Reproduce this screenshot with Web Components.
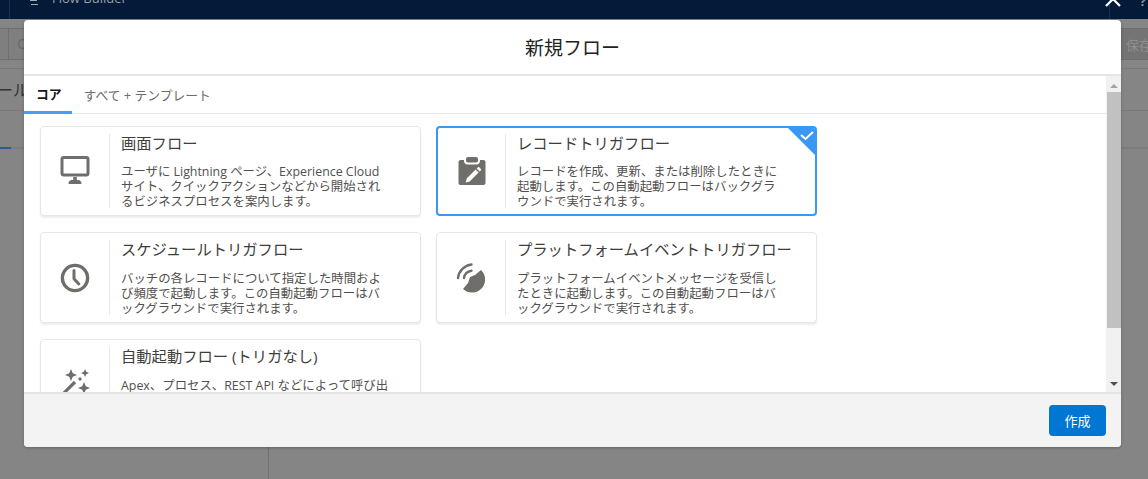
<!DOCTYPE html>
<html lang="ja">
<head>
<meta charset="utf-8">
<title>新規フロー</title>
<style>
    html, body { margin: 0; height: 100%; overflow: hidden; }
    body { font-family: "Open Sans", "Noto Sans CJK JP", sans-serif; }
</style>
</head>
<body>
<flow-backdrop>
    <flow-modal heading="新規フロー">
        <flow-card heading="画面フロー" icon="screen">ユーザに Lightning ページ、Experience Cloud サイト、クイックアクションなどから開始されるビジネスプロセスを案内します。</flow-card>
        <flow-card heading="レコードトリガフロー" icon="record" selected>レコードを作成、更新、または削除したときに起動します。この自動起動フローはバックグラウンドで実行されます。</flow-card>
        <flow-card heading="スケジュールトリガフロー" icon="clock">バッチの各レコードについて指定した時間および頻度で起動します。この自動起動フローはバックグラウンドで実行されます。</flow-card>
        <flow-card heading="プラットフォームイベントトリガフロー" icon="event">プラットフォームイベントメッセージを受信したときに起動します。この自動起動フローはバックグラウンドで実行されます。</flow-card>
        <flow-card heading="自動起動フロー (トリガなし)" icon="wand">Apex、プロセス、REST API などによって呼び出されます。この自動起動フローはバックグラウンドで実行されます。</flow-card>
    </flow-modal>
</flow-backdrop>

<script>
const ICONS = {
    screen: `<svg viewBox="0 0 30 30" width="30" height="30"><rect x="2" y="1.500" width="26" height="17.500" rx="1.800" fill="none" stroke="#706e6b" stroke-width="3"/><path d="M13.200 21h3.600v3h-3.600z" fill="#706e6b"/><path d="M8.500 28c0-2.400 1.400-4 3.400-4h6.200c2 0 3.400 1.600 3.400 4z" fill="#706e6b"/></svg>`,
    record: `<svg viewBox="0 0 30 30" width="30" height="30"><path fill="#706e6b" d="M3.500 4H7v1c0 2 1.500 3.500 3.400 3.500h9.200C21.500 8.500 23 7 23 5V4h3.500c1.100 0 2 .9 2 2v21c0 1.100-.9 2-2 2h-23c-1.100 0-2-.9-2-2V6c0-1.100.9-2 2-2z"/><rect x="9" y="1" width="12" height="5.500" rx="2" fill="#706e6b"/><path fill="#fff" d="M18.600 13.500l3 3-8.900 8.900-4 1 1-4zM19.700 12.400l1-1c.5-.5 1.200-.5 1.700 0l1.300 1.300c.5.5.5 1.200 0 1.700l-1 1z"/></svg>`,
    clock: `<svg viewBox="0 0 30 30" width="30" height="30"><circle cx="15" cy="15" r="12.600" fill="none" stroke="#706e6b" stroke-width="3.400"/><path d="M14 7.500v8.200l4.800 5.200" fill="none" stroke="#706e6b" stroke-width="3" stroke-linecap="round" stroke-linejoin="round"/></svg>`,
    event: `<svg viewBox="0 0 30 30" width="30" height="30"><path fill="#706e6b" d="M7 26A13 13 0 0 0 25 7L19 12l-5 2-2 6z"/><path d="M2 15C2.800 8 8.500 2.200 15.500 1.500M8 15C8.500 11.500 11.500 8.500 15.500 7.800" fill="none" stroke="#706e6b" stroke-width="2.400" stroke-linecap="round"/></svg>`,
    wand: `<svg viewBox="0 0 30 30" width="30" height="30"><g fill="#706e6b"><path d="M11 -1l1.800 4.200L17 5l-4.200 1.800L11 11 9.200 6.800 5 5l4.200-1.800z"/><path d="M25 -1l1.200 2.800L29 3l-2.800 1.200L25 7l-1.200-2.800L21 3l2.800-1.200z"/><path d="M24 12l1.800 4.200L30 18l-4.200 1.800L24 24l-1.800-4.200L18 18l4.200-1.800z"/><path d="M20 7l2 2-2 2-2-2z"/></g><path d="M15 12L1 26" stroke="#706e6b" stroke-width="3.200"/></svg>`
};

class FlowBackdrop extends HTMLElement {
    constructor() {
        super();
        const shadow = this.attachShadow({ mode: 'open' });
        shadow.innerHTML = `
            <style>
                :host {
                    display: flex;
                    flex-direction: column;
                    position: relative;
                    width: 1148px;
                    height: 479px;
                    overflow: hidden;
                    background: #858585;
                    color: #4a4a4a;
                }
                .topbar {
                    height: 19px;
                    flex: none;
                    background: linear-gradient(#1b2f4b, #1b2f4b) 9px 0 / 1px 100% no-repeat,
                                linear-gradient(#1b2f4b, #1b2f4b) 1109px 0 / 1px 100% no-repeat,
                                #031a38;
                    display: flex;
                    justify-content: space-between;
                    color: #9a9fa8;
                    font-size: 13px;
                    line-height: 1;
                    overflow: hidden;
                }
                .topbar .brand { display: flex; gap: 14px; margin-left: 30px; }
                .topbar .brand svg { margin-top: -1px; }
                .topbar .title { margin-top: -8px; }
                .topbar .close { display: flex; gap: 18px; margin-right: 2px; }
                .topbar .close svg { margin-top: -10px; }
                .topbar .help { margin-top: -5px; font-weight: bold; color: #8b8f98; }
                .tools {
                    height: 32px;
                    box-sizing: border-box;
                    margin-top: 9px;
                    flex: none;
                    background: linear-gradient(90deg, #7f7f7f 600px, #747474 600px);
                    border-top: 1px solid #6f6f6f;
                    border-bottom: 1px solid #6f6f6f;
                    display: flex;
                    justify-content: space-between;
                    align-items: center;
                    font-size: 13px;
                    color: #8f8f8f;
                    overflow: hidden;
                    white-space: nowrap;
                }
                .tools .left { height: 100%; margin-left: 8px; border-left: 1px solid #6f6f6f; display: flex; align-items: center; padding-left: 8px; }
                .tools .save { width: 22px; overflow: hidden; }
                .rule { height: 1px; background: #797979; flex: none; margin-top: 8px; }
                .side {
                    font-size: 16px;
                    color: #333;
                    height: 41px;
                    line-height: 43px;
                    margin-left: -3px;
                    flex: none;
                }
                .tab { height: 2px; margin-top: 36px; background: linear-gradient(90deg, #2a5c91 11px, #7b7b7b 11px); flex: none; }
                .split { position: absolute; left: 268px; top: 440px; bottom: 0; width: 1px; background: #6f6f6f; }
                ::slotted(*) { position: absolute; left: 24px; top: 20px; }
            </style>
            <div class="topbar">
                <span class="brand">
                    <svg width="8" height="7" viewBox="0 0 8 7"><path d="M0 1.500h7M1 5.500h7" stroke="#a6abb3" stroke-width="1"/></svg>
                    <span class="title">Flow Builder</span>
                </span>
                <span class="close">
                    <svg width="18" height="18" viewBox="0 0 18 18"><path d="M2 2l14 14M16 2L2 16" stroke="#fff" stroke-width="2.200"/></svg>
                    <span class="help">?</span>
                </span>
            </div>
            <div class="tools">
                <span class="left"><svg width="12" height="12" viewBox="0 0 12 12"><circle cx="6" cy="6" r="4.500" fill="none" stroke="#6a6a6a" stroke-width="1.300"/></svg></span>
                <span class="save">保存</span>
            </div>
            <div class="rule"></div>
            <div class="side">ール</div>
            <div class="rule" style="margin-top:0"></div>
            <div class="tab"></div>
            <div class="split"></div>
            <slot></slot>
        `;
    }
}

class FlowModal extends HTMLElement {
    constructor() {
        super();
        const shadow = this.attachShadow({ mode: 'open' });
        shadow.innerHTML = `
            <style>
                :host {
                    display: flex;
                    flex-direction: column;
                    width: 1097px;
                    height: 427px;
                    background: #fff;
                    border-radius: 4px;
                    overflow: hidden;
                    box-shadow: 0 1px 3px rgba(0,0,0,0.25);
                    color: #3e3e3c;
                }
                header {
                    flex: none;
                    height: 56px;
                    box-sizing: border-box;
                    border-bottom: 2px solid #e5e5e5;
                    display: flex;
                    align-items: center;
                    justify-content: center;
                    font-size: 19px;
                    color: #222;
                }
                .middle { flex: 1; display: flex; min-height: 0; }
                .scroll { flex: 1; min-width: 0; overflow: hidden; }
                .tabs {
                    display: flex;
                    height: 38px;
                    box-sizing: border-box;
                    border-bottom: 1px solid #e8e8e8;
                    font-size: 12.800px;
                    color: #6b6b6b;
                }
                .tabs div { display: flex; align-items: center; padding: 0 12px 2px 11.500px; height: 38px; box-sizing: border-box; }
                .tabs .on { color: #181818; font-weight: 700; border-bottom: 3px solid #4a9cf0; width: 48px; padding: 0 0 0 12px; }
                .grid {
                    display: grid;
                    grid-template-columns: 381px 381px;
                    grid-auto-rows: 90.800px;
                    column-gap: 15px;
                    row-gap: 16px;
                    padding: 11.700px 16px;
                }
                .bar {
                    flex: none;
                    width: 15px;
                    background: #f1f1f1;
                    display: flex;
                    flex-direction: column;
                    align-items: center;
                }
                .bar i { flex: none; width: 0; height: 0; border-left: 4px solid transparent; border-right: 4px solid transparent; }
                .bar .up { margin: 8px 0 4px; border-bottom: 4px solid #a3a3a3; }
                .bar .thumb { flex: none; width: 14px; height: 236px; background: #c1c1c1; }
                .bar .down { margin-top: auto; margin-bottom: 6px; border-top: 4px solid #505050; }
                footer {
                    flex: none;
                    height: 55px;
                    box-sizing: border-box;
                    background: #f3f3f3;
                    border-top: 2px solid #e5e5e5;
                    display: flex;
                    align-items: center;
                    justify-content: flex-end;
                    padding: 0 15px 0 0;
                }
                button {
                    width: 57px;
                    height: 31px;
                    border: 0;
                    border-radius: 4px;
                    background: #0176d3;
                    color: #fff;
                    font: inherit;
                    font-size: 13px;
                    padding: 0;
                }
            </style>
            <header></header>
            <div class="middle">
                <div class="scroll">
                    <div class="tabs"><div class="on">コア</div><div>すべて + テンプレート</div></div>
                    <div class="grid"><slot></slot></div>
                </div>
                <div class="bar"><i class="up"></i><div class="thumb"></div><i class="down"></i></div>
            </div>
            <footer><button>作成</button></footer>
        `;
        shadow.querySelector('header').textContent = this.getAttribute('heading');
    }
}

class FlowCard extends HTMLElement {
    constructor() {
        super();
        const shadow = this.attachShadow({ mode: 'open' });
        shadow.innerHTML = `
            <style>
                :host {
                    display: flex;
                    position: relative;
                    box-sizing: border-box;
                    height: 100%;
                    background: #fff;
                    border: 1px solid #e6e6e6;
                    border-radius: 4px;
                    box-shadow: 0 2px 2px rgba(0,0,0,0.07);
                    overflow: hidden;
                    padding: 7px 0;
                }
                :host([selected]) {
                    border: 2px solid #3a97f3;
                    padding: 6px 0;
                    box-shadow: none;
                }
                .icon {
                    flex: none;
                    width: 69px;
                    box-sizing: border-box;
                    border-right: 1px solid #e8e8e8;
                    display: flex;
                    align-items: center;
                    justify-content: center;
                }
                :host([selected]) .icon { width: 68px; }
                svg { overflow: visible; }
                .text { flex: 1; padding: 0 31px 0 11px; min-width: 0; }
                :host([selected]) .text { padding-right: 30px; }
                h3 {
                    margin: -1px 0 0;
                    font-size: 15.300px;
                    font-weight: 400;
                    line-height: 20px;
                    color: #3e3e3c;
                    white-space: nowrap;
                }
                p {
                    margin: 11.500px 0 0;
                    font-size: 12.400px;
                    line-height: 15px;
                    line-break: loose;
                    color: #514f4d;
                }
                .check {
                    display: none;
                    position: absolute;
                    right: 0;
                    top: 0;
                    width: 0;
                    height: 0;
                    border-top: 27px solid #3a97f3;
                    border-left: 27px solid transparent;
                }
                :host([selected]) .check { display: block; }
                .check svg { position: absolute; right: 1px; top: -24px; }
            </style>
            <div class="icon"></div>
            <div class="text">
                <h3></h3>
                <p><slot></slot></p>
            </div>
            <div class="check"><svg width="14" height="9" viewBox="0 0 14 9"><path d="M1 4l4.500 4L13 1" fill="none" stroke="#fff" stroke-width="2"/></svg></div>
        `;
        shadow.querySelector('.icon').innerHTML = ICONS[this.getAttribute('icon')];
        shadow.querySelector('h3').textContent = this.getAttribute('heading');
    }
}

customElements.define('flow-backdrop', FlowBackdrop);
customElements.define('flow-modal', FlowModal);
customElements.define('flow-card', FlowCard);
</script>
</body>
</html>
